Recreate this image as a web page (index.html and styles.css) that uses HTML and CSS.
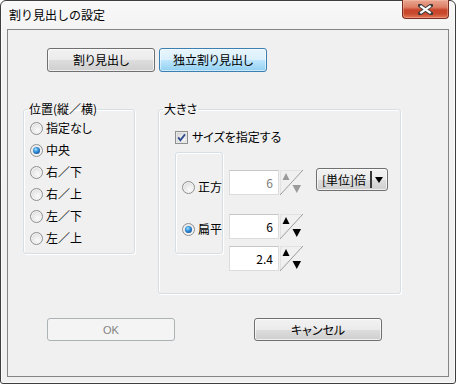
FILE: index.html
```html
<!DOCTYPE html>
<html lang="ja">
<head>
<meta charset="utf-8">
<title>割り見出しの設定</title>
<link rel="stylesheet" href="styles.css">
</head>
<body>
<div class="window">
  <div class="titlebar">
    <span class="title">割り見出しの設定</span>
    <div class="close">
      <svg width="15" height="11" viewBox="0 0 15 11">
        <path d="M2 1.5 L13 9.5 M13 1.5 L2 9.5" stroke="#3a3a3a" stroke-width="4" stroke-linecap="square"/>
        <path d="M2.3 1.8 L12.7 9.2 M12.7 1.8 L2.3 9.2" stroke="#ffffff" stroke-width="2.2"/>
      </svg>
    </div>
  </div>
  <div class="panel">
    <div class="tabs">
      <div class="btn tab">割り見出し</div>
      <div class="btn tab active">独立割り見出し</div>
    </div>
    <div class="groups">
      <fieldset class="group pos">
        <legend>位置(縦／横)</legend>
        <div class="radio-list">
          <div class="radio-row"><span class="radio"></span>指定なし</div>
          <div class="radio-row"><span class="radio on"></span>中央</div>
          <div class="radio-row"><span class="radio"></span>右／下</div>
          <div class="radio-row"><span class="radio"></span>右／上</div>
          <div class="radio-row"><span class="radio"></span>左／下</div>
          <div class="radio-row"><span class="radio"></span>左／上</div>
        </div>
      </fieldset>
      <fieldset class="group size">
        <legend>大きさ</legend>
        <div class="size-inner">
          <div class="check-row">
            <svg class="check" width="13" height="13" viewBox="0 0 13 13">
              <defs>
                <linearGradient id="cg" x1="0" y1="0" x2="1" y2="1">
                  <stop offset="0" stop-color="#d8d8d8"/>
                  <stop offset="1" stop-color="#fbfbfb"/>
                </linearGradient>
              </defs>
              <rect x="0.5" y="0.5" width="12" height="12" fill="#f4f4f4" stroke="#8e8f8f"/>
              <rect x="2" y="2" width="9" height="9" fill="url(#cg)" stroke="#c9c9c9" stroke-width="0.6"/>
              <path d="M3.2 6.4 L5.4 9.2 L10 3.4" fill="none" stroke="#2c4a8e" stroke-width="1.8"/>
            </svg>
            サイズを指定する
          </div>
          <div class="size-body">
            <div class="shape-box">
              <div class="radio-row r1"><span class="radio"></span>正方</div>
              <div class="radio-row r2"><span class="radio on"></span>扁平</div>
            </div>
            <div class="inputs">
              <div class="spin-row">
                <div class="field dim">6</div>
                <svg class="spin" width="23" height="25" viewBox="0 0 23 25">
                  <path d="M0.5 24.5 V0.5 H22.5" fill="none" stroke="#e2e2e2"/>
                  <line x1="0" y1="25" x2="23" y2="0" stroke="#9c9c9c"/>
                  <polygon points="2.5,10 6,3 9.5,10" fill="#9a9a9a"/>
                  <polygon points="12.5,15 21,15 16.75,23" fill="#9a9a9a"/>
                </svg>
              </div>
              <div class="spin-row r2">
                <div class="field">6</div>
                <svg class="spin" width="23" height="25" viewBox="0 0 23 25">
                  <path d="M0.5 24.5 V0.5 H22.5" fill="none" stroke="#e2e2e2"/>
                  <line x1="0" y1="25" x2="23" y2="0" stroke="#9c9c9c"/>
                  <polygon points="2.5,10 6,3 9.5,10" fill="#000"/>
                  <polygon points="12.5,15 21,15 16.75,23" fill="#000"/>
                </svg>
              </div>
              <div class="spin-row r3">
                <div class="field">2.4</div>
                <svg class="spin" width="23" height="25" viewBox="0 0 23 25">
                  <path d="M0.5 24.5 V0.5 H22.5" fill="none" stroke="#e2e2e2"/>
                  <line x1="0" y1="25" x2="23" y2="0" stroke="#9c9c9c"/>
                  <polygon points="2.5,10 6,3 9.5,10" fill="#000"/>
                  <polygon points="12.5,15 21,15 16.75,23" fill="#000"/>
                </svg>
              </div>
            </div>
            <div class="btn dropdown">
              <span class="dd-label">[単位]倍</span>
              <span class="dd-sep"></span>
              <span class="dd-arrow"></span>
            </div>
          </div>
        </div>
      </fieldset>
    </div>
    <div class="actions">
      <div class="btn action disabled">OK</div>
      <div class="btn action">キャンセル</div>
    </div>
  </div>
</div>
</body>
</html>
```

FILE: styles.css
```css
html, body {
  margin: 0;
  padding: 0;
  background: #ffffff;
}

body {
  width: 456px;
  height: 384px;
  font-family: "Noto Sans CJK JP", "Liberation Sans", sans-serif;
  font-size: 12px;
  line-height: 16px;
  font-feature-settings: "palt";
  color: #000;
}

.window {
  box-sizing: border-box;
  width: 456px;
  height: 384px;
  border: 1px solid #3e3e3e;
  border-radius: 6px 6px 3px 3px;
  background: linear-gradient(#f8f8f8, #f2f2f2 40px, #f0f0f0);
  box-shadow: inset 0 0 0 1px #fbfbfb;
  padding: 0 6px 6px;
  display: flex;
  flex-direction: column;
}

.titlebar {
  height: 28px;
  flex-shrink: 0;
  display: flex;
  align-items: flex-start;
}

.title {
  margin: 6px 0 0 2px;
  font-size: 12px;
  font-feature-settings: normal;
}

.close {
  margin-left: auto;
  margin-top: -1px;
  width: 47px;
  height: 19px;
  box-sizing: border-box;
  border: 1px solid #7a2d22;
  border-top: none;
  border-radius: 0 0 4px 4px;
  background: linear-gradient(#eaa691 0%, #dd8066 40%, #c8452c 55%, #c9492e 75%, #e27756 100%);
  box-shadow: inset 0 0 0 1px rgba(255, 210, 190, 0.35);
  display: flex;
  align-items: center;
  justify-content: center;
}

.panel {
  flex: 1;
  border: 1px solid #858585;
  background: #f0f0f0;
  display: flex;
  flex-direction: column;
}

.btn {
  box-sizing: border-box;
  border: 1px solid #707070;
  border-radius: 3px;
  background: linear-gradient(#f2f2f2 0%, #ebebeb 50%, #dddddd 51%, #cfcfcf 100%);
  box-shadow: inset 0 0 0 1px rgba(255, 255, 255, 0.65);
  display: flex;
  align-items: center;
  justify-content: center;
}

.tabs {
  display: flex;
  gap: 4px;
  margin: 18px 0 0 39px;
}

.tab {
  width: 108px;
  height: 24px;
}

.tab.active {
  border-color: #3c7fb1;
  background: linear-gradient(#e8f5fd 0%, #d9f0fc 50%, #bee6fd 51%, #92d0f2 100%);
  box-shadow: inset 0 0 0 1px rgba(255, 255, 255, 0.5);
}

.groups {
  display: flex;
  align-items: flex-start;
  gap: 23px;
  margin: 29px 0 0 15px;
}

.group {
  box-sizing: border-box;
  margin: 0;
  padding: 0;
  min-width: 0;
  border: 1px solid #d5dfe5;
  border-radius: 3px;
  box-shadow: inset 1px 1px 0 #ffffff, 1px 1px 0 #ffffff;
}

.group legend {
  margin-left: 4px;
  padding: 0 1px;
  line-height: 16px;
}

.pos {
  width: 112px;
  height: 153px;
}

.radio-list {
  padding-left: 6px;
}

.size {
  width: 243px;
  height: 193px;
}

.size-inner {
  padding-left: 16px;
}

.radio-row {
  height: 22px;
  display: flex;
  align-items: center;
  gap: 3px;
  white-space: nowrap;
}

.radio {
  box-sizing: border-box;
  width: 13px;
  height: 13px;
  border-radius: 50%;
  border: 1px solid #8e8f8f;
  background: radial-gradient(circle at 60% 65%, #fbfbfb 0%, #e6e6e6 55%, #cfcfcf 100%);
  box-shadow: inset 0 0 0 1px #f4f4f4;
  position: relative;
  flex-shrink: 0;
}

.radio.on::after {
  content: "";
  position: absolute;
  left: 2px;
  top: 2px;
  width: 7px;
  height: 7px;
  border-radius: 50%;
  background: radial-gradient(circle at 40% 35%, #a6e0ff 0%, #3c9ae0 35%, #1a5fa6 70%, #0c3a6b 100%);
}

.check-row {
  margin-top: 12px;
  height: 16px;
  display: flex;
  align-items: center;
  gap: 4px;
}

.check {
  flex-shrink: 0;
}

.size-body {
  display: flex;
  align-items: flex-start;
  margin-top: 7px;
}

.shape-box {
  box-sizing: border-box;
  width: 48px;
  height: 102px;
  border: 1px solid #d5dfe5;
  border-radius: 3px;
  box-shadow: inset 1px 1px 0 #ffffff, 1px 1px 0 #ffffff;
  padding: 0 0 0 6px;
}

.shape-box .radio-row {
  height: 16px;
}

.shape-box .r1 {
  margin-top: 26px;
}

.shape-box .r2 {
  margin-top: 26px;
}

.inputs {
  margin: 18px 0 0 6px;
  display: flex;
  flex-direction: column;
}

.spin-row {
  display: flex;
  gap: 1px;
}

.spin-row.r2 {
  margin-top: 19px;
}

.spin-row.r3 {
  margin-top: 7px;
}

.field {
  box-sizing: border-box;
  width: 50px;
  height: 25px;
  border: 1px solid #dcdcdc;
  border-top-color: #c6c6c6;
  background: #ffffff;
  text-align: right;
  padding: 4px 5px 0 0;
  line-height: 16px;
}

.field.dim {
  color: #7d7d7d;
}

.dropdown {
  width: 72px;
  height: 23px;
  margin: 16px 0 0 13px;
  justify-content: flex-start;
}

.dd-label {
  padding-left: 5px;
  white-space: nowrap;
}

.dd-sep {
  margin-left: auto;
  width: 2px;
  height: 17px;
  background: #3a3a3a;
}

.dd-arrow {
  width: 0;
  height: 0;
  border-left: 4px solid transparent;
  border-right: 4px solid transparent;
  border-top: 6px solid #000;
  margin: 0 4px 0 3px;
}

.actions {
  display: flex;
  gap: 79px;
  margin: 24px 0 0 39px;
}

.action {
  width: 128px;
  height: 23px;
}

.action.disabled {
  border-color: #adb2b5;
  background: #f4f4f4;
  box-shadow: none;
  color: #838383;
  font-family: "Liberation Sans", sans-serif;
  font-size: 11px;
}
```
